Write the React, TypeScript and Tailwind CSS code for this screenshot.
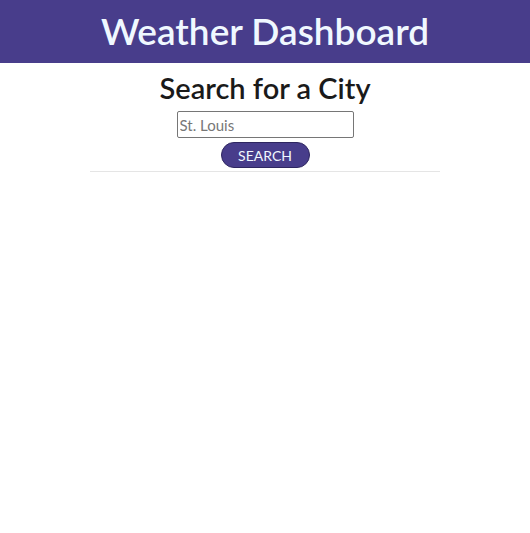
export default function App() {
	return (
		<div className="min-h-[533px] bg-white font-['Lato',sans-serif]">
			<header className="h-[63px] bg-[#483d8b] flex items-center justify-center">
				<h1 className="text-[37px] font-semibold text-[#f0f8ff] leading-none -mt-[2px]">Weather Dashboard</h1>
			</header>
			<div className="flex flex-col items-center">
				<h2 className="text-[29px] font-semibold text-[#1a1a1a] leading-none mt-[10px]">Search for a City</h2>
				<input
					className="mt-[9px] w-[177px] h-[27px] border border-[#767676] rounded-[2px] px-[2px] text-[15px] text-[#333] placeholder:text-[#777]"
					placeholder="St. Louis"
				/>
				<button className="mt-[4px] w-[89px] h-[26px] rounded-full bg-[#483d8b] border border-[#2e2660] text-[14px] text-[#f0f8ff] uppercase">
					Search
				</button>
				<hr className="mt-[3px] w-[350px] border-t border-[#e5e5e5]" />
			</div>
		</div>
	)
}
